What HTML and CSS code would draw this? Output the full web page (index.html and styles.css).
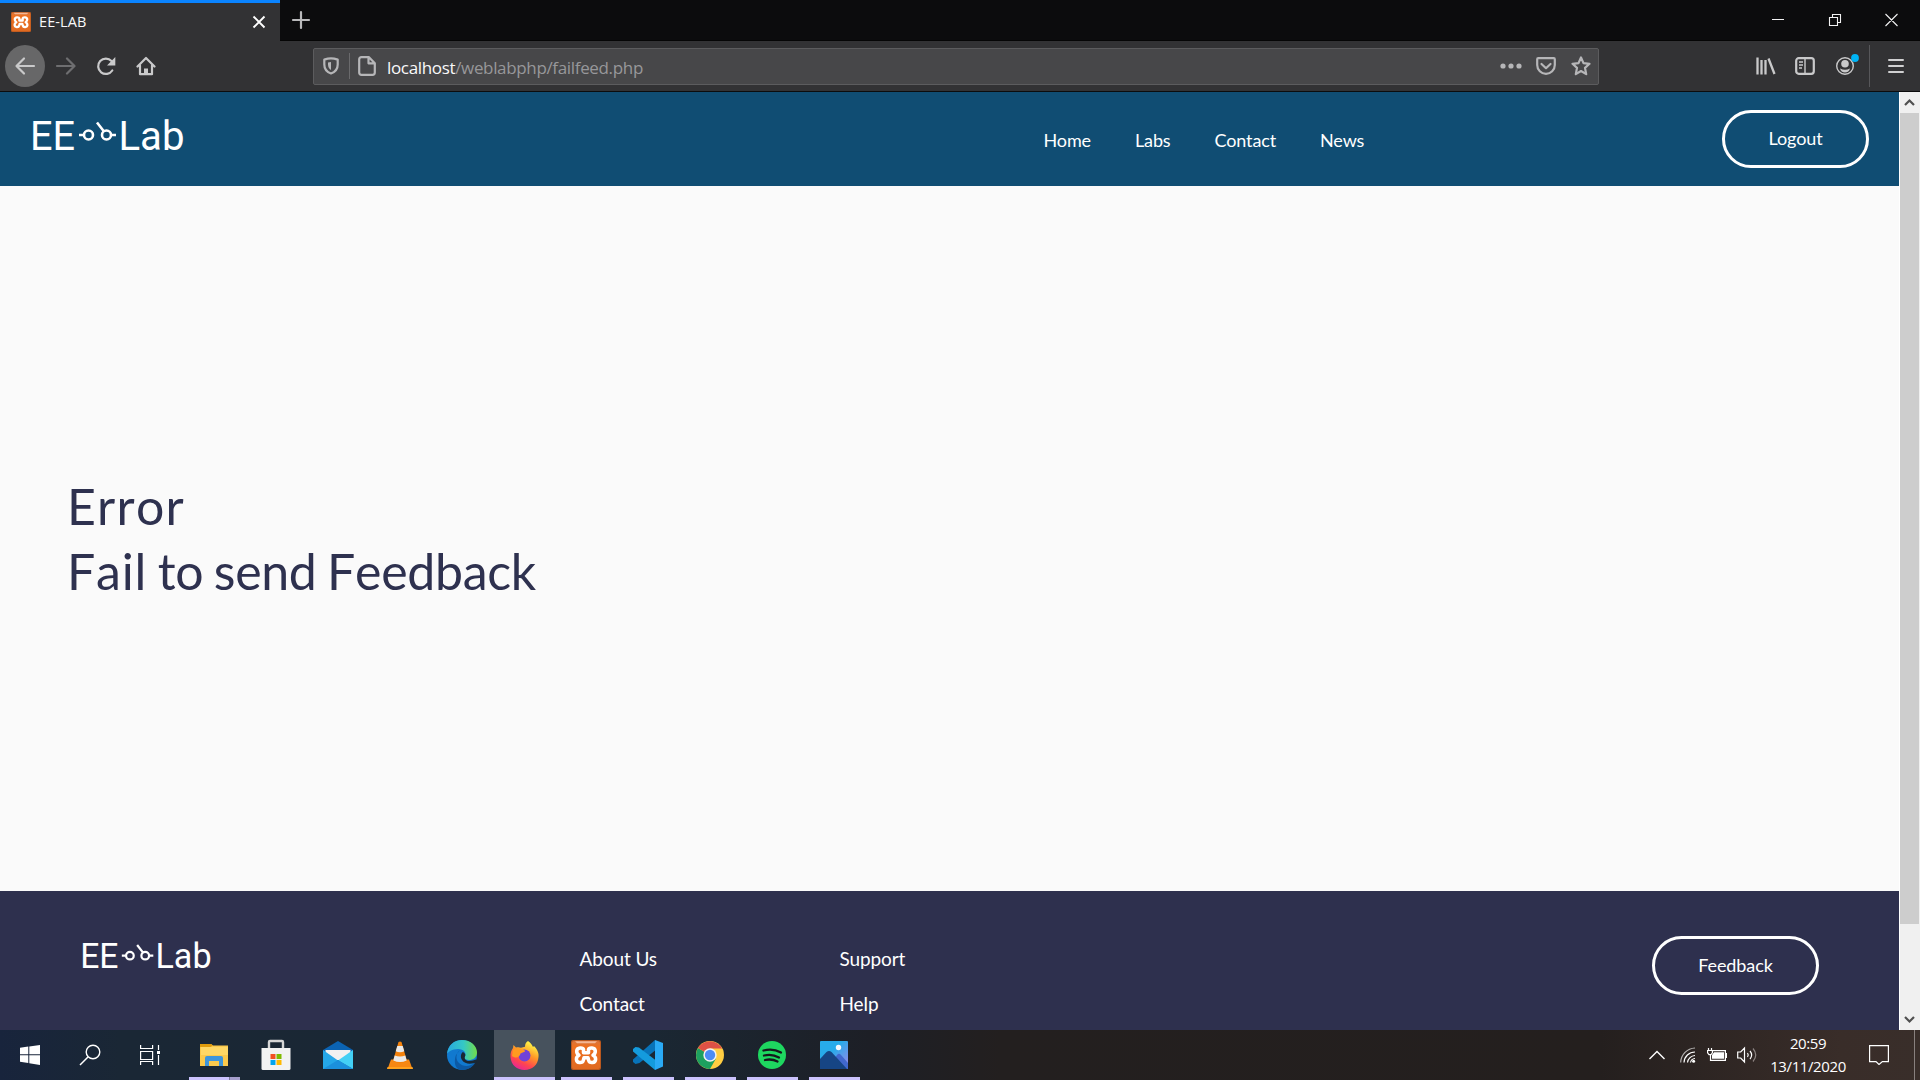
FILE: index.html
```html
<!DOCTYPE html>
<html lang="en">
<head>
<meta charset="utf-8">
<title>EE-LAB</title>
<link rel="stylesheet" href="styles.css">
</head>
<body>
<svg class="defs" aria-hidden="true">
  <defs>
    <linearGradient id="xg" x1="0" y1="0" x2="0" y2="1"><stop offset="0" stop-color="#d9753c"/><stop offset=".2" stop-color="#ee701f"/><stop offset="1" stop-color="#e06a22"/></linearGradient>
    <symbol id="xampp" viewBox="0 0 30 30">
      <rect width="30" height="30" rx="2" fill="#b9581f"/><rect x="1" y="1" width="28" height="28" rx="2" fill="url(#xg)"/>
      <path d="M4 1.300h22l-2 2H6z" fill="#f3b693"/>
      <path d="M12.500 12.800h5V9.500C18 7.500 24 7 24.300 11c.1 2-.8 3.300-2.300 4.300 1.700.9 2.800 2 2.600 4.200-.3 3.800-6 3.900-6.900 1l-.7-2.800h-4l-.7 2.800c-.9 2.900-6.600 2.800-6.900-1-.2-2.200.9-3.300 2.600-4.200-1.500-1-2.400-2.300-2.300-4.300C6 7 12 7.500 12.500 9.500z" fill="none" stroke="#fff" stroke-width="3.500" stroke-linejoin="round"/>
    </symbol>
    <symbol id="logo" viewBox="0 0 154 36">
      <g fill="#fff" font-family="Roboto, sans-serif" font-size="41">
        <text x="-1" y="32" textLength="45" lengthAdjust="spacingAndGlyphs">EE</text>
        <text x="87.500" y="32" textLength="66" lengthAdjust="spacingAndGlyphs">Lab</text>
      </g>
      <g fill="none" stroke="#fff" stroke-width="2.600"><circle cx="57.500" cy="17" r="4.500"/><circle cx="75.500" cy="17" r="4.500"/><path d="M48 17h5M80 17h5M66 4.500l7 9"/></g>
    </symbol>
  </defs>
</svg>
<div class="tabs">
  <div class="tab">
    <svg class="favicon"><use href="#xampp"/></svg>
    <span class="tab-title">EE-LAB</span>
    <svg class="tab-close" width="14" height="14" viewBox="0 0 14 14"><path d="M1.500 1.500l11 11M12.500 1.500l-11 11" stroke="#fff" stroke-width="1.900"/></svg>
  </div>
  <svg class="new-tab" width="20" height="20" viewBox="0 0 20 20"><path d="M2 10h16M10 2v16" stroke="#b9b9ba" stroke-width="2.200" stroke-linecap="round"/></svg>
  <svg class="window-controls" width="130" height="16" viewBox="0 0 130 16"><path d="M0 7.500h12M57.500 5.500h8v8h-8zM60.500 5V2.500h8v8H66M113.500 2l12 12M125.500 2l-12 12" fill="none" stroke="#f2f2f2" stroke-width="1.100"/></svg>
</div>
<div class="toolbar">
  <div class="back"><svg width="22" height="20" viewBox="0 0 22 20"><path d="M20 10H3M10 2.500L2.500 10l7.500 7.500" class="ico"/></svg></div>
  <svg class="forward" width="22" height="20" viewBox="0 0 22 20"><path d="M2 10h17M12 2.500l7.500 7.500-7.500 7.500" class="ico"/></svg>
  <svg class="reload" width="20" height="20" viewBox="0 0 20 20"><path d="M16.300 14.500A7.700 7.700 0 1 1 15.500 5" class="ico"/><path d="M19.300 1v8.500H11z" fill="#c9c9ca"/></svg>
  <svg class="home" width="20" height="20" viewBox="0 0 20 20"><path d="M1.500 10.500L10 2l8.500 8.500M4 9.500v8.700h12V9.500" class="ico"/><path d="M8 19v-6.500h4V19z" fill="#c9c9ca"/></svg>
  <div class="urlbar">
    <svg class="shield" width="16" height="18" viewBox="0 0 16 18"><path d="M8 1.300c2.500 0 4.500.5 6.700 1.300v4.900c0 4-2.500 7.500-6.700 9-4.200-1.500-6.700-5-6.700-9V2.600C3.500 1.800 5.500 1.300 8 1.300z" class="ico u"/><path d="M8 5v8c-2-1-3-3-3-5.500V5.500z" fill="#b6b6b8"/></svg>
    <i class="url-sep"></i>
    <svg class="page" width="18" height="20" viewBox="0 0 18 20"><path d="M3.500 1.200H11l5.800 6v9.300c0 1.500-.8 2.300-2.300 2.300h-11c-1.500 0-2.300-.8-2.300-2.300v-13c0-1.500.8-2.300 2.300-2.300zM10.500 1.500v5.800h6" class="ico u"/></svg>
    <span class="url"><b>localhost</b>/weblabphp/failfeed.php</span>
    <svg class="dots" width="22" height="6" viewBox="0 0 22 6"><g fill="#b6b6b8"><circle cx="3" cy="3" r="2.600"/><circle cx="11" cy="3" r="2.600"/><circle cx="19" cy="3" r="2.600"/></g></svg>
    <svg class="pocket" width="20" height="18" viewBox="0 0 20 18"><path d="M2.200 1.200h15.600q1 0 1 1V8c0 5-4 8.800-8.800 8.800S1.200 13 1.200 8V2.200q0-1 1-1z" class="ico u"/><path d="M5.500 7l4.500 4.200L14.500 7" class="ico u"/></svg>
    <svg class="star" width="20" height="20" viewBox="0 0 20 20"><path d="M10 1.500l2.500 5.600 6 .7-4.500 4.100 1.200 6.200L10 15l-5.200 3.100L6 11.900 1.500 7.800l6-.7z" class="ico u"/></svg>
  </div>
  <svg class="library" width="20" height="18" viewBox="0 0 20 18"><path d="M1.500.5v17M5.500 3v14.500M9.500 3v14.500M12.500 1.500l6 15.500" stroke="#c9c9ca" stroke-width="2.300" fill="none"/></svg>
  <svg class="sidebar" width="20" height="18" viewBox="0 0 20 18"><rect x="1.200" y="1.200" width="17.600" height="15.600" rx="2.500" class="ico"/><path d="M10 1v16M4 5h4M4 8h4M4 11h3" stroke="#c9c9ca" stroke-width="1.400"/></svg>
  <svg class="account" width="26" height="26" viewBox="0 0 26 26"><circle cx="10" cy="15" r="8.300" fill="none" stroke="#c9c9ca" stroke-width="1.400"/><circle cx="10" cy="12.800" r="3.800" fill="#c9c9ca"/><path d="M5 17.500q5 2.500 10 0-1 4-5 4t-5-4z" fill="#c9c9ca"/><circle cx="20" cy="7" r="3.900" fill="#00b3f4"/></svg>
  <i class="tool-sep"></i>
  <svg class="menu" width="16" height="16" viewBox="0 0 16 16"><path d="M1 2h14M1 8h14M1 14h14" stroke="#d0d0d1" stroke-width="2" stroke-linecap="round"/></svg>
</div>
<div class="viewport">
  <div class="document">
    <header>
      <svg class="logo"><use href="#logo"/></svg>
      <nav><a>Home</a><a>Labs</a><a>Contact</a><a>News</a></nav>
      <a class="button logout">Logout</a>
    </header>
    <main><h1><span class="wide">Error</span><br><span class="fail">Fail</span> to send Feedback</h1></main>
    <footer>
      <svg class="logo-small"><use href="#logo"/></svg>
      <div class="links first"><a>About Us</a><a>Contact</a></div>
      <div class="links"><a>Support</a><a>Help</a></div>
      <a class="button feedback">Feedback</a>
    </footer>
  </div>
  <div class="scrollbar">
    <svg width="21" height="21" viewBox="0 0 21 21"><path d="M6 13l4.500-4.500L15 13" fill="none" stroke="#505050" stroke-width="2.200"/></svg>
    <div class="thumb"></div>
    <svg class="down" width="21" height="21" viewBox="0 0 21 21"><path d="M6 8l4.500 4.500L15 8" fill="none" stroke="#505050" stroke-width="2.200"/></svg>
  </div>
</div>
<div class="taskbar">
  <div class="sys"><svg width="20" height="20" viewBox="0 0 20 20"><path d="M0 2.800L8.300 1.600v7.700H0zM9.300 1.400L20 0v9.300H9.300zM0 10.300h8.300V18L0 16.800zM9.300 10.300H20V20L9.300 18.300z" fill="#fff"/></svg></div>
  <div class="sys"><svg width="22" height="22" viewBox="0 0 22 22"><circle cx="14" cy="8" r="6.800" fill="none" stroke="#fff" stroke-width="1.400"/><path d="M9.200 12.800L1 21" stroke="#fff" stroke-width="1.500"/></svg></div>
  <div class="sys"><svg width="20" height="20" viewBox="0 0 20 20"><path d="M.6 0v3.500h12V0M.6 6.500h12v8H.6zM.6 20v-3.500h12V20M18.500 0v5M18.500 10v10" fill="none" stroke="#fff" stroke-width="1.200"/><path d="M17 6h3v3h-3z" fill="#fff"/></svg></div>
  <div class="apps">
    <div class="app open multi"><svg width="28" height="24" viewBox="0 0 28 24"><path d="M0 1h11l2 1.500h15V23H0z" fill="#fbc94c"/><path d="M0 1h11l2 1.500L10.500 4H0z" fill="#e09b0c"/><path d="M1 4h27v8H1z" fill="#ffd765"/><path d="M5 23V15q0-2 2-2h14q2 0 2 2v8h-4v-5H9v5z" fill="#3e95db"/></svg></div>
    <div class="app"><svg width="30" height="32" viewBox="0 0 30 32"><path d="M8 10V3q0-1 1-1h12q1 0 1 1v7" fill="none" stroke="#d6d6d6" stroke-width="2.400"/><path d="M.5 9h29v20.500q0 1.500-1.500 1.500H2q-1.500 0-1.500-1.500z" fill="#f2f2f2"/><path d="M9.500 15h5v5h-5z" fill="#f25022"/><path d="M15.500 15h5v5h-5z" fill="#7fba00"/><path d="M9.500 21h5v5h-5z" fill="#00a4ef"/><path d="M15.500 21h5v5h-5z" fill="#ffb900"/></svg></div>
    <div class="app"><svg width="30" height="28" viewBox="0 0 30 28"><path d="M0 9L15 0l15 9v9H0z" fill="#0b63b3"/><path d="M2.500 9h25v10h-25z" fill="#f1f1f1"/><path d="M0 9l15 10.500L30 28H0z" fill="#25a7e8"/><path d="M30 9L15 19.500 30 28z" fill="#43d0f5"/><path d="M0 28l15-9 15 9z" fill="#1b90dc"/></svg></div>
    <div class="app"><svg width="26" height="28" viewBox="0 0 26 28"><path d="M4 18.500h18l3.500 9.500H.5z" fill="#f68712"/><path d="M11.500 1q1.500-1 3 0L20 20q-7 4.500-14 0z" fill="#f5820b"/><path d="M10.300 5h5.400l1.600 5.300q-4.300 1.800-8.600 0zM7.700 14.500q5.300 2.200 10.600 0l1.400 5q-6.700 3-13.400 0z" fill="#e9e9e9"/><path d="M.5 26h25l.5 2H0z" fill="#ffa11d"/></svg></div>
    <div class="app"><svg width="30" height="30" viewBox="0 0 30 30"><defs><linearGradient id="e1"><stop stop-color="#28a8e0"/><stop offset=".55" stop-color="#35c8c5"/><stop offset="1" stop-color="#72dc49"/></linearGradient></defs><circle cx="15" cy="15" r="15" fill="#1179cf"/><path d="M0 14C1 5 7 0 15 0c9 0 15 6 15 12.500 0 5-4 7.500-8 7.500-4.500 0-5-2-4.200-3.200C20 13 17 9 11 9 5 9 1 12 0 14z" fill="url(#e1)"/><path d="M13 10c-4 3-5 9-1 13 4 4 11 4 16.500-.5C26 27 21 30 15 30 7 30 7 20 9 15z" fill="#0c59a4"/><path d="M18 16.500c-1 2 .5 4.500 4 4.500 3 0 5-1 7-1.500l1 2.500c-4 2-12 3-15-2-2-3-1-7 1-8 2 1 3 3 2 4.500z" fill="#1a2733"/></svg></div>
    <div class="app open active"><svg width="29" height="29" viewBox="0 0 29 29"><defs><linearGradient id="f1" x1=".8" y1="0" x2=".3" y2="1"><stop offset=".1" stop-color="#fff044"/><stop offset=".45" stop-color="#ff9526"/><stop offset=".75" stop-color="#ff4450"/><stop offset="1" stop-color="#e5249b"/></linearGradient></defs><path d="M18 0c3 2 4 4 5 6l1-1c4 4 5 8 4.500 11C28 24 22 29 14.500 29S1 24 .5 16C.2 12 1.500 9 3 7l.5-3L6 6.500c2-.5 3-.5 5 .2l4-1C15 3 16 1 18 0z" fill="url(#f1)"/><circle cx="14.500" cy="14.500" r="6" fill="#7042d8"/><path d="M3 9c3-2.500 7-2 9 0 2-.5 3 .5 3 1.500l-4.500 2C10 16 6 18 2 15z" fill="#ff9a20"/></svg></div>
    <div class="app open"><svg width="30" height="30"><use href="#xampp"/></svg></div>
    <div class="app open"><svg width="30" height="30" viewBox="0 0 30 30"><path d="M22 0L0 19.500v2.500l2.500 2 4-1L24 9z" fill="#0873b9"/><path d="M2.500 7L0 9v2.500L22 30l3-8L6 7.500z" fill="#149bdd"/><path d="M22 0l8 3v23.500L22 30V0z" fill="#2aaaf5"/></svg></div>
    <div class="app open"><svg width="28" height="28" viewBox="0 0 28 28"><circle cx="14" cy="14" r="14" fill="#ffcd42"/><path d="M14 14L1.900 7A14 14 0 0 0 14 28l6-10.500z" fill="#1da05f"/><path d="M14 14L1.900 7A14 14 0 0 1 26.100 7.500H14z" fill="#de5145"/><circle cx="14" cy="14" r="6.700" fill="#f2f2f2"/><circle cx="14" cy="14" r="5.200" fill="#4c8bf5"/></svg></div>
    <div class="app open"><svg width="28" height="28" viewBox="0 0 28 28"><circle cx="14" cy="14" r="14" fill="#1ed760"/><path d="M5.500 9.500q9.500-2.500 17.500 2M6 14.500q8-2 15 2M7 19q7-1.500 12.500 1.500" stroke="#15181c" stroke-width="2.300" stroke-linecap="round" fill="none"/></svg></div>
    <div class="app open"><svg width="28" height="28" viewBox="0 0 28 28"><defs><linearGradient id="p1" x2="1" y2="1"><stop offset=".4" stop-color="#28abea"/><stop offset="1" stop-color="#a184ea"/></linearGradient></defs><rect width="28" height="28" rx="1" fill="url(#p1)"/><path d="M14 18l3-4q2-2.500 4 0l7 8v6H14z" fill="#4168ce"/><path d="M0 18l6.500-7q2.500-2 5 0L27 28H0z" fill="#164584"/><circle cx="18.500" cy="6.500" r="2.700" fill="#f5f8fc"/></svg></div>
  </div>
  <div class="tray">
    <svg width="16" height="10" viewBox="0 0 16 10"><path d="M.5 9L8 1.500 15.500 9" fill="none" stroke="#fff" stroke-width="1.400"/></svg>
    <svg class="wifi" width="16" height="16" viewBox="0 0 16 16"><g fill="none" stroke="#fff" stroke-width="1.200"><path d="M.7 15.500A15 15 0 0 1 15 1" opacity=".65"/><path d="M4 15.500A11 11 0 0 1 15 5M7.500 15.500A8 8 0 0 1 15 8.500M10.500 15.500A5 5 0 0 1 15 11.500"/></g><circle cx="13.600" cy="14.200" r="1.500" fill="#fff"/></svg>
    <svg class="battery" width="20" height="14" viewBox="0 0 20 14"><path d="M5.500 2.600h12.900v9.800H3.500V7M19.400 5v5M1.500 0v2.500M4.500 0v2.500M.6 2.500h4.800v2.300L4 6.600H2L.6 4.800z" fill="none" stroke="#fff" stroke-width="1.200"/><path d="M7 4.200h10v6.600H5V7z" fill="#fff"/></svg>
    <svg class="volume" width="21" height="18" viewBox="0 0 21 18"><path d="M.7 6h3l3.800-4v14l-3.800-4h-3zM10.500 7q1.500 2 0 4M13 5q3.300 4 0 8" fill="none" stroke="#fff" stroke-width="1.200"/><path d="M16 2.500q5.500 6.500 0 13" fill="none" stroke="#8b8380" stroke-width="1.200"/></svg>
    <div class="clock"><span class="time">20:59</span><span class="date">13/11/2020</span></div>
    <svg class="notice" width="20" height="20" viewBox="0 0 20 20"><path d="M.6.600h18.800v16h-6L10 19.500l-3-2.900H.6z" fill="none" stroke="#fff" stroke-width="1.200"/></svg>
    <i class="show-desktop"></i>
  </div>
</div>
</body>
</html>
```
FILE: styles.css
```css
* { box-sizing: border-box; }
body { margin: 0; width: 1920px; height: 1080px; overflow: hidden; display: flex; flex-direction: column; background: #fafafa; font-family: "Open Sans", "Noto Sans", sans-serif; }
svg { display: block; flex: none; }
i { flex: none; }
.defs { position: absolute; width: 0; height: 0; }
.ico { fill: none; stroke: #c9c9ca; stroke-width: 2.2; stroke-linecap: round; stroke-linejoin: round; }
.ico.u { stroke: #b6b6b8; }

.tabs { height: 41px; background: #0c0c0d; display: flex; flex: none; border-bottom: 1px solid #050505; }
.tab { width: 280px; height: 41px; flex: none; background: #323234; border-top: 3px solid #0a84ff; display: flex; align-items: center; padding-left: 11px; }
.favicon { width: 20px; height: 20px; }
.tab-title { margin-left: 8px; width: 60px; color: #f9f9fa; font-size: 14.500px; letter-spacing: 0.1px; line-height: 20px; }
.tab-close { margin-left: 153px; }
.new-tab { margin: 10px 0 0 11px; }
.window-controls { margin: 12px 0 0 1461px; }

.toolbar { height: 51px; flex: none; background: #323234; border-bottom: 1px solid #0c0c0d; display: flex; align-items: center; }
.back { width: 40px; height: 42px; border-radius: 50%; margin-left: 5px; background: #676768; display: flex; align-items: center; justify-content: center; }
.forward { margin-left: 10px; opacity: .4; }
.reload { margin-left: 19px; }
.home { margin-left: 20px; }
.urlbar { margin-left: 157px; width: 1286px; height: 37px; background: #474749; border: 1px solid #5c5c5e; border-radius: 2px; display: flex; align-items: center; flex: none; }
.shield { margin-left: 9px; }
.url-sep { width: 1px; height: 26px; background: #6a6a6c; margin-left: 10px; }
.page { margin-left: 8px; }
.url { margin-left: 11px; width: 280px; color: #97979a; font-size: 17px; letter-spacing: -0.34px; white-space: nowrap; line-height: 24px; padding-top: 4px; }
.url b { font-weight: 400; color: #f9f9fa; }
.dots { margin-left: 833px; }
.pocket { margin-left: 14px; }
.star { margin-left: 15px; }
.library { margin-left: 157px; }
.sidebar { margin-left: 19px; }
.account { margin: -4px 0 0 20px; }
.tool-sep { width: 1px; height: 42px; background: #57575a; margin-left: 8px; }
.menu { margin-left: 18px; }

.viewport { height: 938px; flex: none; display: flex; }
.document { width: 1899px; font-family: Lato, sans-serif; display: flex; flex-direction: column; }
header { height: 94px; background: #104d73; display: flex; align-items: center; padding: 0 30px; color: #fff; font-size: 18px; }
.logo { width: 154px; height: 36px; margin: -6px 0 0 1px; }
nav { display: flex; gap: 44px; margin-left: 858.5px; line-height: 22px; padding-top: 1px; letter-spacing: -0.13px; }
.button { border: 3px solid #fff; color: #fff; font-size: 18px; line-height: 22px; padding-bottom: 2px; letter-spacing: -0.1px; display: flex; align-items: center; justify-content: center; flex: none; }
.logout { width: 147px; height: 58px; border-radius: 29px; margin-left: auto; }
main { flex: 1; padding: 288px 67px 0; }
h1 { margin: 0; font-weight: 400; font-size: 50px; line-height: 65px; color: #2e314f; font-kerning: none; letter-spacing: -0.3px; word-spacing: -2px; }
.wide { letter-spacing: 1.2px; }
.fail { letter-spacing: 0.8px; }
footer { height: 139px; background: #2e304e; display: flex; align-items: flex-start; color: #fff; }
.logo-small { width: 131px; height: 31px; margin: 50px 0 0 81px; }
.links { width: 260px; display: flex; flex-direction: column; font-size: 19px; letter-spacing: -0.1px; line-height: 45px; padding-top: 45px; }
.links.first { margin-left: 367.5px; }
.feedback { width: 167px; height: 59px; border-radius: 30px; margin: 45px 80px 0 auto; }

.scrollbar { width: 21px; background: #f0f0f0; border-left: 1px solid #fff; display: flex; flex-direction: column; }
.scrollbar svg { margin-left: -1px; }
.thumb { height: 811px; width: 19px; background: #cdcdcd; }
.scrollbar .down { margin-top: auto; }

.taskbar { height: 50px; flex: none; display: flex; background: linear-gradient(90deg, #18243c 0, #1a2735 120px, #1a2733 650px, #1d1f26 870px, #231f1f 1000px, #241f1e 1600px, #392d29 1840px, #392e2a); }
.sys { width: 60px; display: flex; align-items: center; justify-content: center; }
.apps { display: flex; margin-left: 3px; }
.app { width: 62px; height: 50px; display: flex; align-items: center; justify-content: center; }
.open { background: linear-gradient(#cbc2fd, #cbc2fd) 6px 47px / 51px 3px no-repeat; }
.multi { background: linear-gradient(90deg, #cbc2fd 40px, #7c789a 40px, #7c789a 41px, #a69fcd 41px) 6px 47px / 51px 3px no-repeat; }
.active { background: linear-gradient(#cbc2fd, #cbc2fd) 1px 47px / 61px 3px no-repeat, linear-gradient(#47525d, #47525d) 1px 0 / 61px 50px no-repeat; }
.tray { margin-left: auto; display: flex; align-items: center; color: #fff; font-size: 15px; }
.wifi { margin-left: 15px; }
.battery { margin-left: 11px; }
.volume { margin-left: 10px; }
.clock { width: 88px; margin-left: 6px; display: flex; flex-direction: column; align-items: center; line-height: 23px; letter-spacing: -0.4px; }
.notice { margin-left: 17px; }
.show-desktop { width: 1px; height: 50px; background: #88807e; margin: 0 5px 0 25px; }
```
